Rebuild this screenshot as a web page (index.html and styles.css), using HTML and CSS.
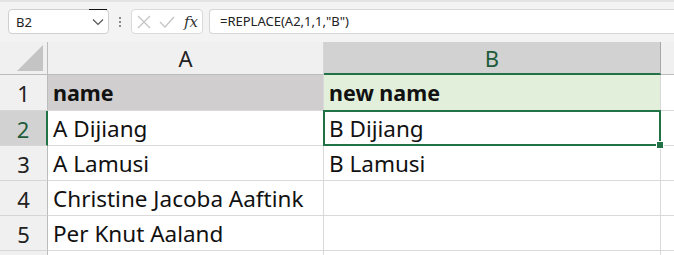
FILE: index.html
```html
<!DOCTYPE html>
<html lang="en">
<head>
  <meta charset="UTF-8" />
  <title>REPLACE example</title>
  <link rel="stylesheet" href="styles.css">
</head>
<body>
  <!-- formula bar -->
  <div class="toolbar">
    <div class="name-box">
      <span>B2</span>
      <span class="caret">
        <svg width="12" height="8" viewBox="0 0 12 8"><polyline points="1,1.5 6,6.5 11,1.5" fill="none" stroke="#555" stroke-width="1.2"/></svg>
      </span>
    </div>
    <div class="grip">
      <i></i><i></i><i></i>
    </div>
    <div class="fx-box">
      <svg width="14" height="14" viewBox="0 0 14 14"><path d="M1 1 L13 13 M13 1 L1 13" stroke="#c4c4c4" stroke-width="1.3"/></svg>
      <svg width="16" height="14" viewBox="0 0 16 14"><polyline points="1,7 6,12 15,2" fill="none" stroke="#c4c4c4" stroke-width="1.3"/></svg>
      <span class="fx">fx</span>
    </div>
    <div class="formula">=REPLACE(A2,1,1,"B")</div>
  </div>

  <!-- sheet -->
  <div class="sheet">
    <div class="corner"><span class="tri"></span></div>
    <div class="col-head">A</div>
    <div class="col-head sel">B</div>
    <div class="col-head blank"></div>

    <div class="row-head">1</div>
    <div class="cell bold fill-gray">name</div>
    <div class="cell bold fill-green">new name</div>
    <div class="cell empty"></div>

    <div class="row-head sel">2</div>
    <div class="cell">A Dijiang</div>
    <div class="cell active">B Dijiang<span class="handle"></span></div>
    <div class="cell empty"></div>

    <div class="row-head">3</div>
    <div class="cell">A Lamusi</div>
    <div class="cell">B Lamusi</div>
    <div class="cell empty"></div>

    <div class="row-head">4</div>
    <div class="cell">Christine Jacoba Aaftink</div>
    <div class="cell"></div>
    <div class="cell empty"></div>

    <div class="row-head">5</div>
    <div class="cell">Per Knut Aaland</div>
    <div class="cell"></div>
    <div class="cell empty"></div>

    <div class="row-head"></div>
    <div class="cell"></div>
    <div class="cell"></div>
    <div class="cell empty"></div>
  </div>
</body>
</html>
```

FILE: styles.css
```css
body {
  margin: 0;
  background-color: #ffffff;
  overflow: hidden;
  font-family: 'Noto Sans', 'Open Sans', sans-serif;
}

.toolbar {
  height: 42px;
  box-sizing: border-box;
  border-top: 2px solid #e3e3e3;
  background-color: #f3f3f3;
  display: flex;
  align-items: flex-start;
  padding-top: 7px;
}

.name-box {
  margin-left: 8px;
  width: 101px;
  height: 25px;
  box-sizing: border-box;
  background-color: #ffffff;
  border: 1px solid #cfcfcf;
  border-radius: 4px;
  display: flex;
  align-items: center;
  justify-content: space-between;
  padding-left: 7px;
  font-size: 13px;
  color: #222;
}

.caret {
  width: 18px;
  height: 23px;
  display: flex;
  align-items: center;
  justify-content: center;
  border-top: 1px solid #111;
  margin-top: -1px;
  margin-right: 1px;
}

.grip {
  width: 22px;
  height: 25px;
  display: flex;
  flex-direction: column;
  align-items: center;
  justify-content: center;
  gap: 2px;
}

.grip i {
  width: 2px;
  height: 2px;
  background-color: #8a8a8a;
}

.fx-box {
  width: 72px;
  height: 25px;
  box-sizing: border-box;
  background-color: #ffffff;
  border: 1px solid #dadada;
  border-radius: 4px;
  display: flex;
  align-items: center;
  gap: 8px;
  padding-left: 5px;
}

.fx {
  font-family: 'DejaVu Serif', 'Liberation Serif', serif;
  font-style: italic;
  font-size: 15px;
  color: #333;
  margin-left: 1px;
}

.formula {
  flex: 1;
  margin-left: 6px;
  height: 25px;
  box-sizing: border-box;
  background-color: #ffffff;
  border: 1px solid #d6d6d6;
  border-right: none;
  border-radius: 4px 0 0 4px;
  padding-left: 10px;
  font-size: 13px;
  line-height: 23px;
  color: #222;
}

.sheet {
  display: grid;
  grid-template-columns: 48px 276px 337px 1fr;
  grid-template-rows: 33px 36px 35px 35px 35px 35px 35px;
}

.sheet > div {
  box-sizing: border-box;
}

.corner {
  background-color: #f0f0f0;
  border-right: 1px solid #bcbcbc;
  border-bottom: 1px solid #bcbcbc;
  position: relative;
}

.tri {
  position: absolute;
  right: 4px;
  bottom: 3px;
  width: 0;
  height: 0;
  border-left: 26px solid transparent;
  border-bottom: 26px solid #c4c4c4;
}

.col-head {
  background-color: #f0f0f0;
  border-right: 1px solid #d6d6d6;
  border-bottom: 1px solid #bcbcbc;
  text-align: center;
  font-size: 22px;
  line-height: 32px;
  color: #222;
}

.col-head.sel {
  background-color: #d2d2d2;
  border-right: 1px solid #a8a8a8;
  border-bottom: 2px solid #217346;
  color: #1e5c3a;
}

.col-head.blank {
  border-right: none;
}

.row-head {
  background-color: #f0f0f0;
  border-right: 1px solid #bcbcbc;
  border-bottom: 1px solid #d6d6d6;
  text-align: center;
  font-size: 22px;
  line-height: 34px;
  padding-top: 1px;
  color: #222;
}

.row-head.sel {
  background-color: #d2d2d2;
  border-right: 2px solid #217346;
  color: #1e5c3a;
}

.cell {
  border-right: 1px solid #d9d9d9;
  border-bottom: 1px solid #d9d9d9;
  padding-left: 5px;
  padding-top: 2px;
  font-size: 22.5px;
  line-height: 32px;
  color: #111;
  white-space: nowrap;
  position: relative;
}

.cell.empty {
  border-right: none;
}

.bold {
  font-weight: bold;
  font-size: 21.5px;
}

.fill-gray {
  background-color: #d0cece;
}

.fill-green {
  background-color: #e2efda;
}

.active::after {
  content: "";
  position: absolute;
  left: -1px;
  top: -1px;
  right: -1px;
  bottom: -1px;
  border: 2px solid #217346;
}

.handle {
  position: absolute;
  right: -4px;
  bottom: -4px;
  width: 6px;
  height: 6px;
  background-color: #217346;
  border: 1px solid #ffffff;
  z-index: 1;
}
```
